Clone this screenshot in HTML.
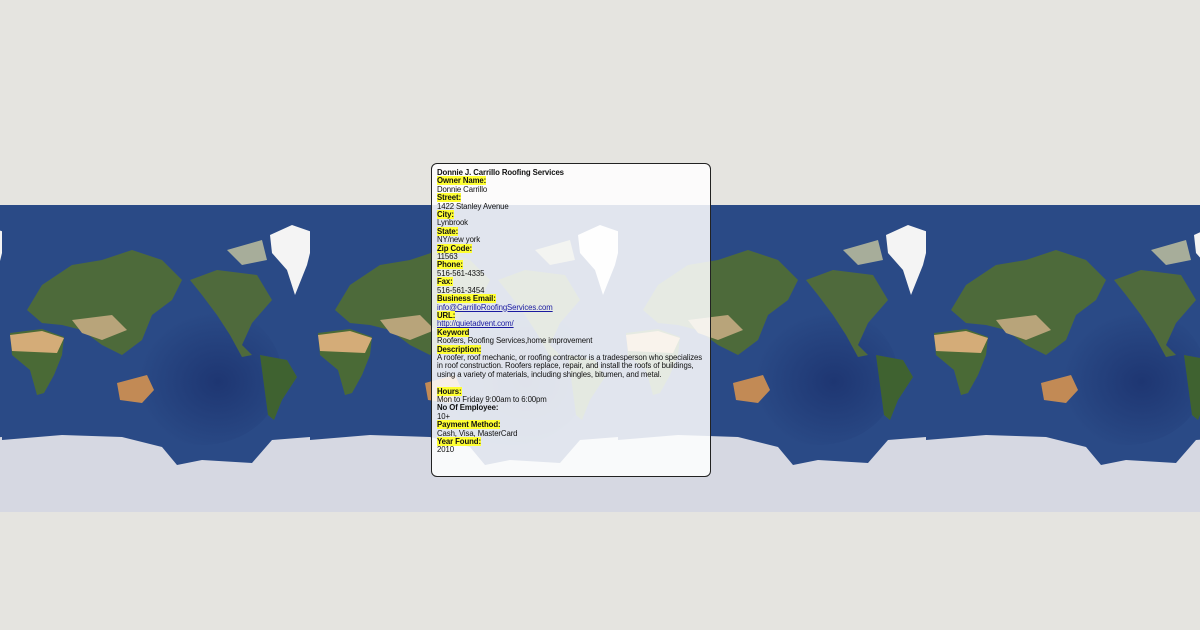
<!DOCTYPE html>
<html><head><meta charset="utf-8"><style>
html,body{margin:0;padding:0;width:1200px;height:630px;background:#e5e4e0;overflow:hidden;position:relative}
#map{position:absolute;left:0;top:205px;width:1200px;height:307px}
#panel{position:absolute;left:431px;top:163px;width:271px;height:302px;padding:5px 2px 5px 5px;border:1px solid #222;border-radius:6px;background:rgba(255,255,255,0.86);font-family:"Liberation Sans",Arial,sans-serif;font-size:7.8px;line-height:8.4px;color:#111;letter-spacing:-0.1px}
b{font-weight:bold}
.l{background:#ffff33;font-weight:bold}
a{color:#1a1aa0;text-decoration:underline}
</style></head><body>
<svg id="map" width="1200" height="307" viewBox="0 0 1200 307">
<defs>
<radialGradient id="oc" cx="0.6" cy="0.55" r="0.5"><stop offset="0" stop-color="#1e3672"/><stop offset="1" stop-color="#2a4a86"/></radialGradient>
<pattern id="t" x="2" y="0" width="308" height="307" patternUnits="userSpaceOnUse">
<rect width="308" height="307" fill="#2a4a86"/>
<ellipse cx="200" cy="170" rx="80" ry="70" fill="url(#oc)"/>
<path d="M25,105 L40,80 L70,60 L100,55 L130,45 L160,55 L180,75 L170,95 L150,110 L140,135 L120,150 L100,140 L80,125 L60,120 L40,118 Z" fill="#4d6a3a"/>
<path d="M70,115 L110,110 L125,125 L100,135 L80,128 Z" fill="#b8a47a"/>
<path d="M8,128 L40,124 L62,132 L60,150 L52,170 L42,188 L35,190 L28,165 L10,150 Z" fill="#4a6a36"/>
<path d="M8,130 L40,126 L62,133 L55,148 L10,146 Z" fill="#d4ac78"/>
<path d="M115,178 L145,170 L152,185 L140,198 L118,195 Z" fill="#c28a55"/>
<path d="M188,75 L215,65 L255,70 L270,95 L250,118 L240,140 L250,150 L240,152 L228,130 L215,110 L200,90 Z" fill="#4f6a3c"/>
<path d="M268,30 L290,20 L313,28 L305,60 L293,90 L285,65 L270,48 Z" fill="#f4f4f4"/>
<path d="M225,45 L260,35 L265,55 L240,60 Z" fill="#a7ad9a"/>
<path d="M258,150 L285,155 L295,172 L280,195 L272,215 L266,210 L262,180 Z" fill="#3f6230"/>
<path d="M0,235 L60,230 L120,232 L160,242 L175,260 L200,255 L250,258 L270,235 L308,232 L308,307 L0,307 Z" fill="#d6d8e2"/>
</pattern>
</defs>
<rect width="1200" height="307" fill="url(#t)"/>
</svg>
<div id="panel">
<b>Donnie J. Carrillo Roofing Services</b><br>
<span class="l">Owner Name:</span><br>Donnie Carrillo<br>
<span class="l">Street:</span><br>1422 Stanley Avenue<br>
<span class="l">City:</span><br>Lynbrook<br>
<span class="l">State:</span><br>NY/new york<br>
<span class="l">Zip Code:</span><br>11563<br>
<span class="l">Phone:</span><br>516-561-4335<br>
<span class="l">Fax:</span><br>516-561-3454<br>
<span class="l">Business Email:</span><br><a>info@CarrilloRoofingServices.com</a><br>
<span class="l">URL:</span><br><a>http://quietadvent.com/</a><br>
<span class="l">Keyword</span><br>Roofers, Roofing Services,home improvement<br>
<span class="l">Description:</span><br>A roofer, roof mechanic, or roofing contractor is a tradesperson who specializes in roof construction. Roofers replace, repair, and install the roofs of buildings, using a variety of materials, including shingles, bitumen, and metal.<br><br>
<span class="l">Hours:</span><br>Mon to Friday 9:00am to 6:00pm<br>
<b>No Of Employee:</b><br>10+<br>
<span class="l">Payment Method:</span><br>Cash, Visa, MasterCard<br>
<span class="l">Year Found:</span><br>2010
</div>
</body></html>
